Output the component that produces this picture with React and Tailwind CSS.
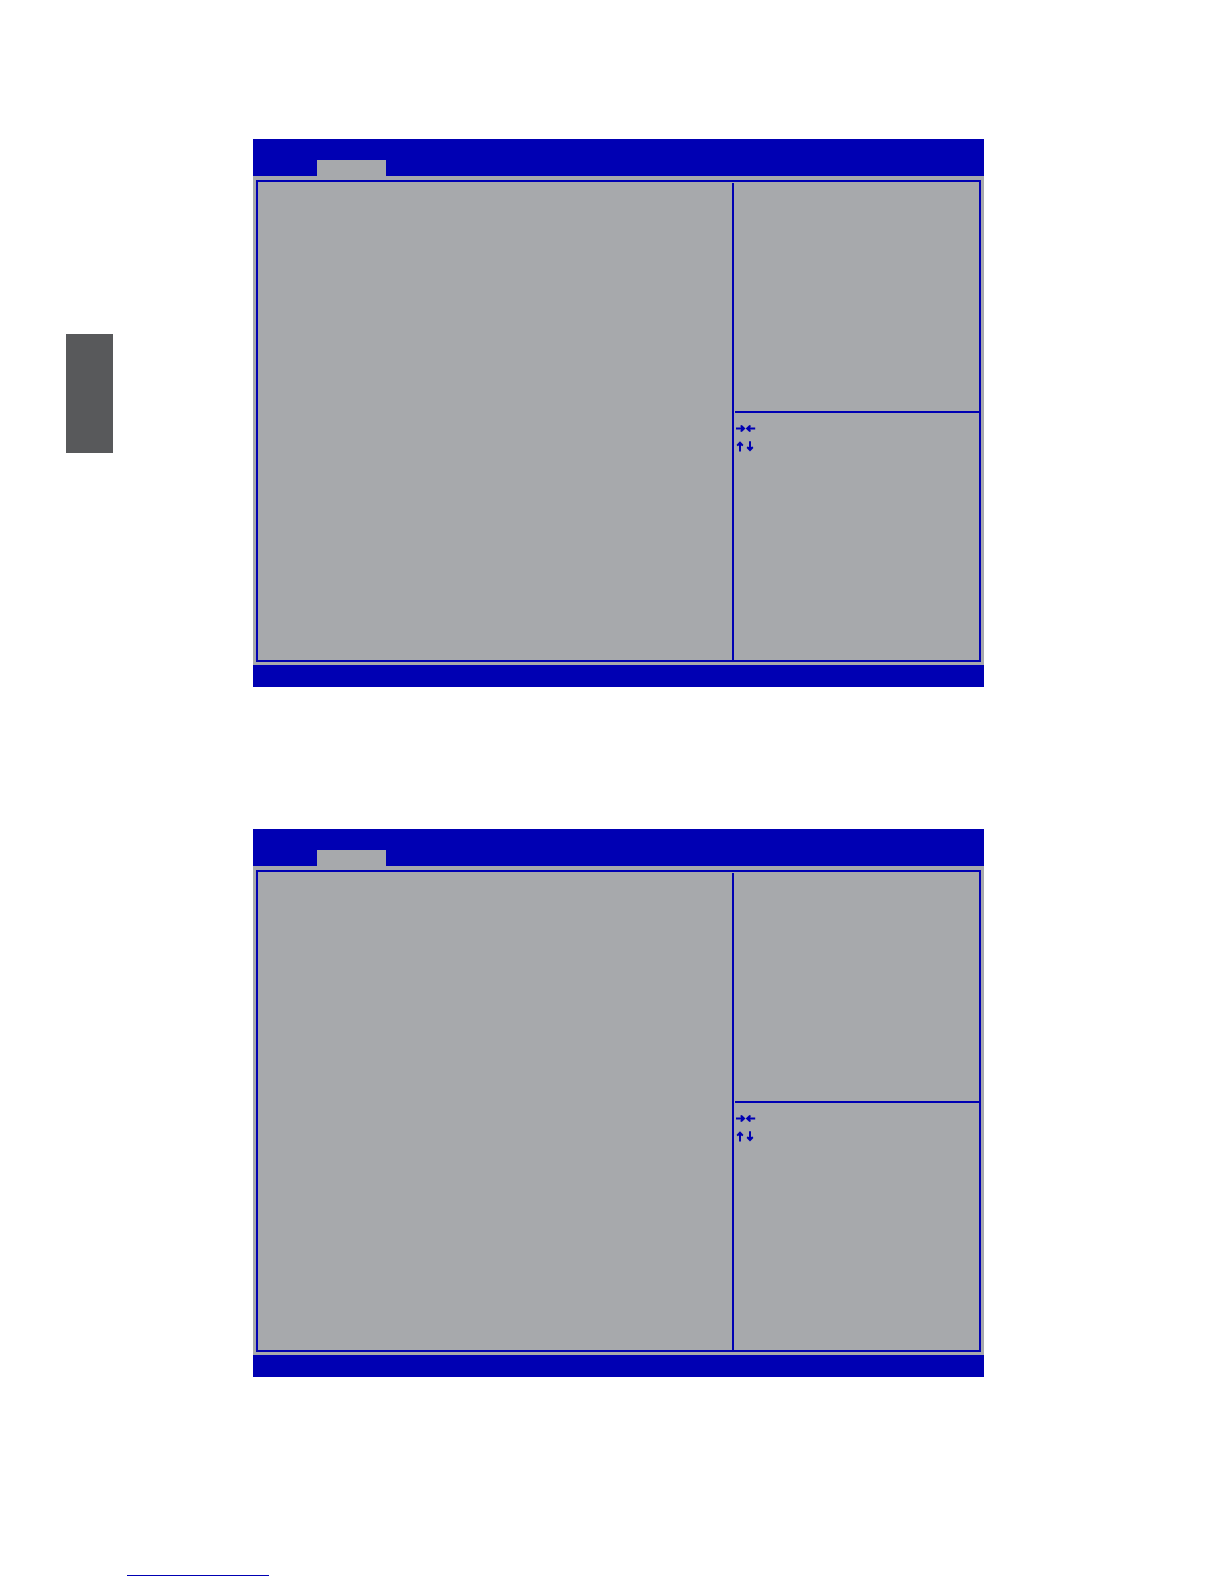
const KeyArrows = () => (
  <div className="flex flex-col gap-2 pl-0.5 pt-[11px]">
    <svg
      className="h-2 w-5 fill-[#0000b3]"
      viewBox="0 0 20 8"
      role="img"
      aria-label="Left and right arrow keys"
    >
      <path d="M0 3.5H5L4.2 1.8L5.8 1L9.5 4.5L5.8 8L4.2 7.2L5 5.5H0Z" />
      <path d="M19.2 3.5H14.2L15 1.8L13.4 1L9.7 4.5L13.4 8L15 7.2L14.2 5.5H19.2Z" />
    </svg>
    <svg
      className="h-3 w-5 fill-[#0000b3]"
      viewBox="0 0 20 12"
      role="img"
      aria-label="Up and down arrow keys"
    >
      <path d="M4 1.2L7.4 4.8L6.6 6.2L5 5.6V11.5H3V5.6L1.4 6.2L0.6 4.8Z" />
      <path d="M14 11.5L17.4 7.9L16.6 6.5L15 7.1V1.2H13V7.1L11.4 6.5L10.6 7.9Z" />
    </svg>
  </div>
);

const SetupScreen = () => {
  return (
    <section className="flex h-[548px] w-full flex-col bg-[#a7a9ac]">
      <header className="flex h-[37px] items-end bg-[#0000b3] pl-16">
        <div className="h-4 w-[69px] bg-[#a7a9ac]" />
      </header>
      <div className="mx-[3px] mb-[3px] mt-1 flex flex-1 border-2 border-[#0000b3]">
        <div className="flex-1" />
        <div className="mt-px w-[247px] border-l-2 border-[#0000b3]">
          <div className="ml-px h-[230px] border-b-2 border-[#0000b3]" />
          <KeyArrows />
        </div>
      </div>
      <footer className="h-[22px] bg-[#0000b3]" />
    </section>
  );
};

const App = () => {
  return (
    <div className="flex min-h-screen flex-col bg-white pb-2">
      <div className="flex flex-1 pl-[66px] pr-60 pt-[139px]">
        <aside className="mr-[140px] mt-[195px] h-[119px] w-[47px] bg-[#58595b]" />
        <main className="flex flex-1 flex-col gap-[142px]">
          <SetupScreen />
          <SetupScreen />
        </main>
      </div>
      <hr className="ml-[127px] w-[142px] border-[#0000b3]" />
    </div>
  );
};

export default App;
